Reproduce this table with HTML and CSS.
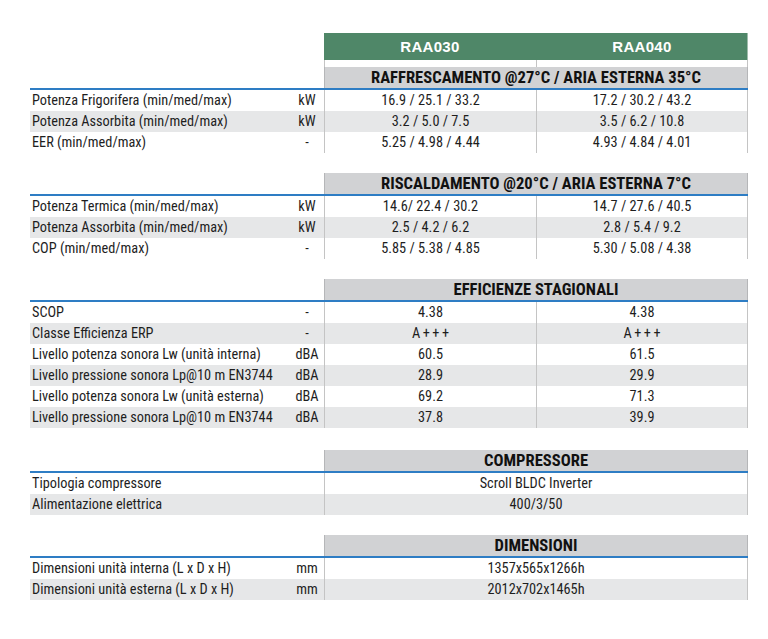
FILE: index.html
```html
<!DOCTYPE html>
<html lang="it">
<head>
<meta charset="utf-8">
<title>RAA030 / RAA040</title>
<link rel="stylesheet" href="styles.css">
</head>
<body>
<div class="sheet">
  <div class="models">
    <div class="blank"></div>
    <div class="model">RAA030</div>
    <div class="model">RAA040</div>
  </div>
  <div class="strip">
    <div class="blank"></div>
    <div class="gap"></div>
    <div class="gap"></div>
  </div>

  <section class="block">
    <div class="bhead"><div class="blank"></div><div class="title">RAFFRESCAMENTO @27°C / ARIA ESTERNA 35°C</div></div>
    <div class="row"><span class="lbl">Potenza Frigorifera (min/med/max)</span><span class="unit">kW</span><span class="val">16.9 / 25.1 / 33.2</span><span class="val">17.2 / 30.2 / 43.2</span></div>
    <div class="row alt"><span class="lbl">Potenza Assorbita (min/med/max)</span><span class="unit">kW</span><span class="val">3.2 / 5.0 / 7.5</span><span class="val">3.5 / 6.2 / 10.8</span></div>
    <div class="row"><span class="lbl">EER (min/med/max)</span><span class="unit">-</span><span class="val">5.25 / 4.98 / 4.44</span><span class="val">4.93 / 4.84 / 4.01</span></div>
  </section>

  <section class="block">
    <div class="bhead"><div class="blank"></div><div class="title">RISCALDAMENTO @20°C / ARIA ESTERNA 7°C</div></div>
    <div class="row"><span class="lbl">Potenza Termica (min/med/max)</span><span class="unit">kW</span><span class="val">14.6/ 22.4 / 30.2</span><span class="val">14.7 / 27.6 / 40.5</span></div>
    <div class="row alt"><span class="lbl">Potenza Assorbita (min/med/max)</span><span class="unit">kW</span><span class="val">2.5 / 4.2 / 6.2</span><span class="val">2.8 / 5.4 / 9.2</span></div>
    <div class="row"><span class="lbl">COP (min/med/max)</span><span class="unit">-</span><span class="val">5.85 / 5.38 / 4.85</span><span class="val">5.30 / 5.08 / 4.38</span></div>
  </section>

  <section class="block loose">
    <div class="bhead"><div class="blank"></div><div class="title">EFFICIENZE STAGIONALI</div></div>
    <div class="row"><span class="lbl">SCOP</span><span class="unit">-</span><span class="val">4.38</span><span class="val">4.38</span></div>
    <div class="row alt"><span class="lbl">Classe Efficienza ERP</span><span class="unit">-</span><span class="val spaced">A+++</span><span class="val spaced">A+++</span></div>
    <div class="row"><span class="lbl">Livello potenza sonora Lw (unità interna)</span><span class="unit">dBA</span><span class="val">60.5</span><span class="val">61.5</span></div>
    <div class="row alt"><span class="lbl">Livello pressione sonora Lp@10 m EN3744</span><span class="unit">dBA</span><span class="val">28.9</span><span class="val">29.9</span></div>
    <div class="row"><span class="lbl">Livello potenza sonora Lw (unità esterna)</span><span class="unit">dBA</span><span class="val">69.2</span><span class="val">71.3</span></div>
    <div class="row alt"><span class="lbl">Livello pressione sonora Lp@10 m EN3744</span><span class="unit">dBA</span><span class="val">37.8</span><span class="val">39.9</span></div>
  </section>

  <section class="block">
    <div class="bhead"><div class="blank"></div><div class="title">COMPRESSORE</div></div>
    <div class="row"><span class="lbl">Tipologia compressore</span><span class="unit"></span><span class="val wide">Scroll BLDC Inverter</span></div>
    <div class="row alt"><span class="lbl">Alimentazione elettrica</span><span class="unit"></span><span class="val wide">400/3/50</span></div>
  </section>

  <section class="block">
    <div class="bhead"><div class="blank"></div><div class="title">DIMENSIONI</div></div>
    <div class="row"><span class="lbl">Dimensioni unità interna (L x D x H)</span><span class="unit">mm</span><span class="val wide">1357x565x1266h</span></div>
    <div class="row alt"><span class="lbl">Dimensioni unità esterna (L x D x H)</span><span class="unit">mm</span><span class="val wide">2012x702x1465h</span></div>
  </section>
</div>
</body>
</html>
```

FILE: styles.css
```css
html, body {
  margin: 0;
  padding: 0;
  background: #ffffff;
}

body {
  font-family: "Roboto Condensed", "Open Sans", sans-serif;
  font-stretch: 75%;
  color: #1e1e1e;
}

.sheet {
  width: 718px;
  margin-left: 30px;
  padding-top: 33px;
}

.models,
.strip {
  display: grid;
  grid-template-columns: 294px 212px 212px;
}

.models .model {
  height: 27px;
  background: #4f8768;
  color: #ffffff;
  font-family: "Liberation Sans", "Arial", sans-serif;
  font-stretch: normal;
  font-weight: bold;
  font-size: 15px;
  letter-spacing: 0.3px;
  display: flex;
  align-items: center;
  justify-content: center;
}

.models .model:last-child {
  box-shadow: inset -1px 0 0 #9fbcac;
}

.strip .gap {
  height: 7px;
  border-left: 1px solid #c4c4c4;
}

.strip .gap:last-child {
  border-right: 1px solid #c4c4c4;
}

.block {
  margin-bottom: 20px;
}

.block.loose {
  margin-bottom: 22px;
}

.bhead {
  display: grid;
  grid-template-columns: 294px 424px;
  border-bottom: 2px solid #2e7dc4;
}

.bhead .title {
  height: 21px;
  background: #d1d2d4;
  border-left: 1px solid #b5b6b8;
  border-right: 1px solid #b5b6b8;
  box-sizing: border-box;
  font-weight: bold;
  font-size: 16.6px;
  display: flex;
  align-items: center;
  justify-content: center;
  color: #111;
}

.row {
  display: grid;
  grid-template-columns: 260px 34px 212px 212px;
  height: 21px;
  font-size: 14.3px;
  line-height: 21px;
}

.row.alt {
  background: #e6e7e8;
}

.row .lbl {
  padding-left: 2px;
  white-space: nowrap;
}

.row .unit {
  text-align: center;
}

.row .val {
  text-align: center;
  border-left: 1px solid #c4c4c4;
}

.row .val:last-child {
  border-right: 1px solid #c4c4c4;
}

.row .val.spaced {
  letter-spacing: 2.5px;
  text-indent: 2.5px;
}

.row .val.wide {
  grid-column: span 2;
}
```
